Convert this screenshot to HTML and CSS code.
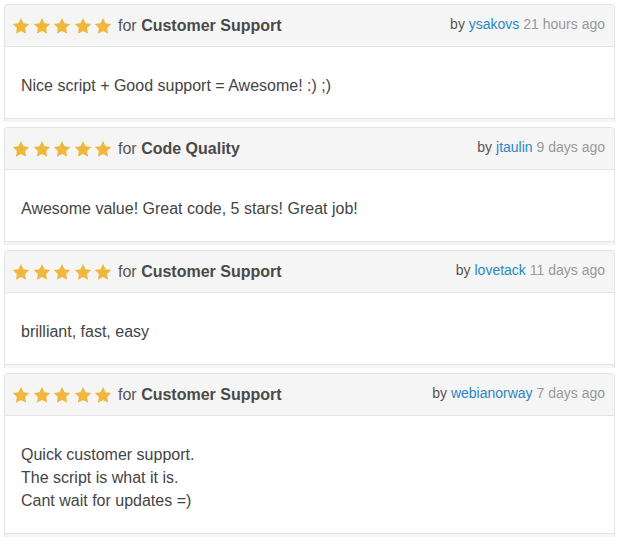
FILE: index.html
```html
<!DOCTYPE html>
<html>
<head>
<meta charset="utf-8">
<link rel="stylesheet" href="styles.css">
</head>
<body>
<svg width="0" height="0" class="defs">
  <defs>
    <symbol id="star" viewBox="0 0 24 24">
      <path d="M12 1.2l3.4 7 7.6 1.1-5.5 5.4 1.3 7.6L12 18.7l-6.8 3.6 1.3-7.6L1 9.3l7.6-1.1z" fill="#efb73e"/>
    </symbol>
  </defs>
</svg>
<div class="list">
  <div class="card">
    <div class="head">
      <div class="left">
        <span class="stars"><svg><use href="#star"/></svg><svg><use href="#star"/></svg><svg><use href="#star"/></svg><svg><use href="#star"/></svg><svg><use href="#star"/></svg></span>
        <span class="for">for <b>Customer Support</b></span>
      </div>
      <div class="meta">by <a href="#">ysakovs</a> <span class="time">21 hours ago</span></div>
    </div>
    <div class="body">Nice script + Good support = Awesome! :) ;)</div>
    <div class="foot"></div>
  </div>
  <div class="card">
    <div class="head">
      <div class="left">
        <span class="stars"><svg><use href="#star"/></svg><svg><use href="#star"/></svg><svg><use href="#star"/></svg><svg><use href="#star"/></svg><svg><use href="#star"/></svg></span>
        <span class="for">for <b>Code Quality</b></span>
      </div>
      <div class="meta">by <a href="#">jtaulin</a> <span class="time">9 days ago</span></div>
    </div>
    <div class="body">Awesome value! Great code, 5 stars! Great job!</div>
    <div class="foot"></div>
  </div>
  <div class="card c3">
    <div class="head">
      <div class="left">
        <span class="stars"><svg><use href="#star"/></svg><svg><use href="#star"/></svg><svg><use href="#star"/></svg><svg><use href="#star"/></svg><svg><use href="#star"/></svg></span>
        <span class="for">for <b>Customer Support</b></span>
      </div>
      <div class="meta">by <a href="#">lovetack</a> <span class="time">11 days ago</span></div>
    </div>
    <div class="body">brilliant, fast, easy</div>
    <div class="foot"></div>
  </div>
  <div class="card">
    <div class="head">
      <div class="left">
        <span class="stars"><svg><use href="#star"/></svg><svg><use href="#star"/></svg><svg><use href="#star"/></svg><svg><use href="#star"/></svg><svg><use href="#star"/></svg></span>
        <span class="for">for <b>Customer Support</b></span>
      </div>
      <div class="meta">by <a href="#">webianorway</a> <span class="time">7 days ago</span></div>
    </div>
    <div class="body">Quick customer support.<br>The script is what it is.<br>Cant wait for updates =)</div>
    <div class="foot"></div>
  </div>
</div>
</body>
</html>
```

FILE: styles.css
```css
html, body {
  margin: 0;
  padding: 0;
  background: #fff;
}
body {
  font-family: "Liberation Sans", Arial, sans-serif;
  color: #444;
}
.defs {
  position: absolute;
  width: 0;
  height: 0;
}
.list {
  display: flex;
  flex-direction: column;
  gap: 5px;
  padding: 4px 4px 0 4px;
}
.card {
  border: 1px solid #e1e5e8;
  border-bottom: none;
  border-radius: 4px 4px 0 0;
  overflow: hidden;
}
.head {
  background: #f5f5f5;
  height: 41px;
  border-bottom: 1px solid #e1e5e8;
  display: flex;
  justify-content: space-between;
  align-items: flex-start;
  padding: 0 9px 0 7px;
}
.left {
  display: flex;
  align-items: center;
  height: 41px;
}
.stars {
  display: flex;
  gap: 2.5px;
  margin-right: 6px;
}
.stars svg {
  width: 18px;
  height: 18px;
}
.for {
  font-size: 16px;
  color: #555;
}
.for b {
  color: #4a4a4a;
}
.meta {
  font-size: 14px;
  color: #555;
  padding-top: 11px;
}
.meta a {
  color: #2b87c3;
  text-decoration: none;
}
.meta .time {
  color: #999;
}
.body {
  font-size: 16px;
  line-height: 23px;
  padding: 27px 16px 21px 16px;
  color: #444;
}
.foot {
  height: 3px;
  background: #f5f5f5;
  border-top: 1px solid #e1e5e8;
}
```
